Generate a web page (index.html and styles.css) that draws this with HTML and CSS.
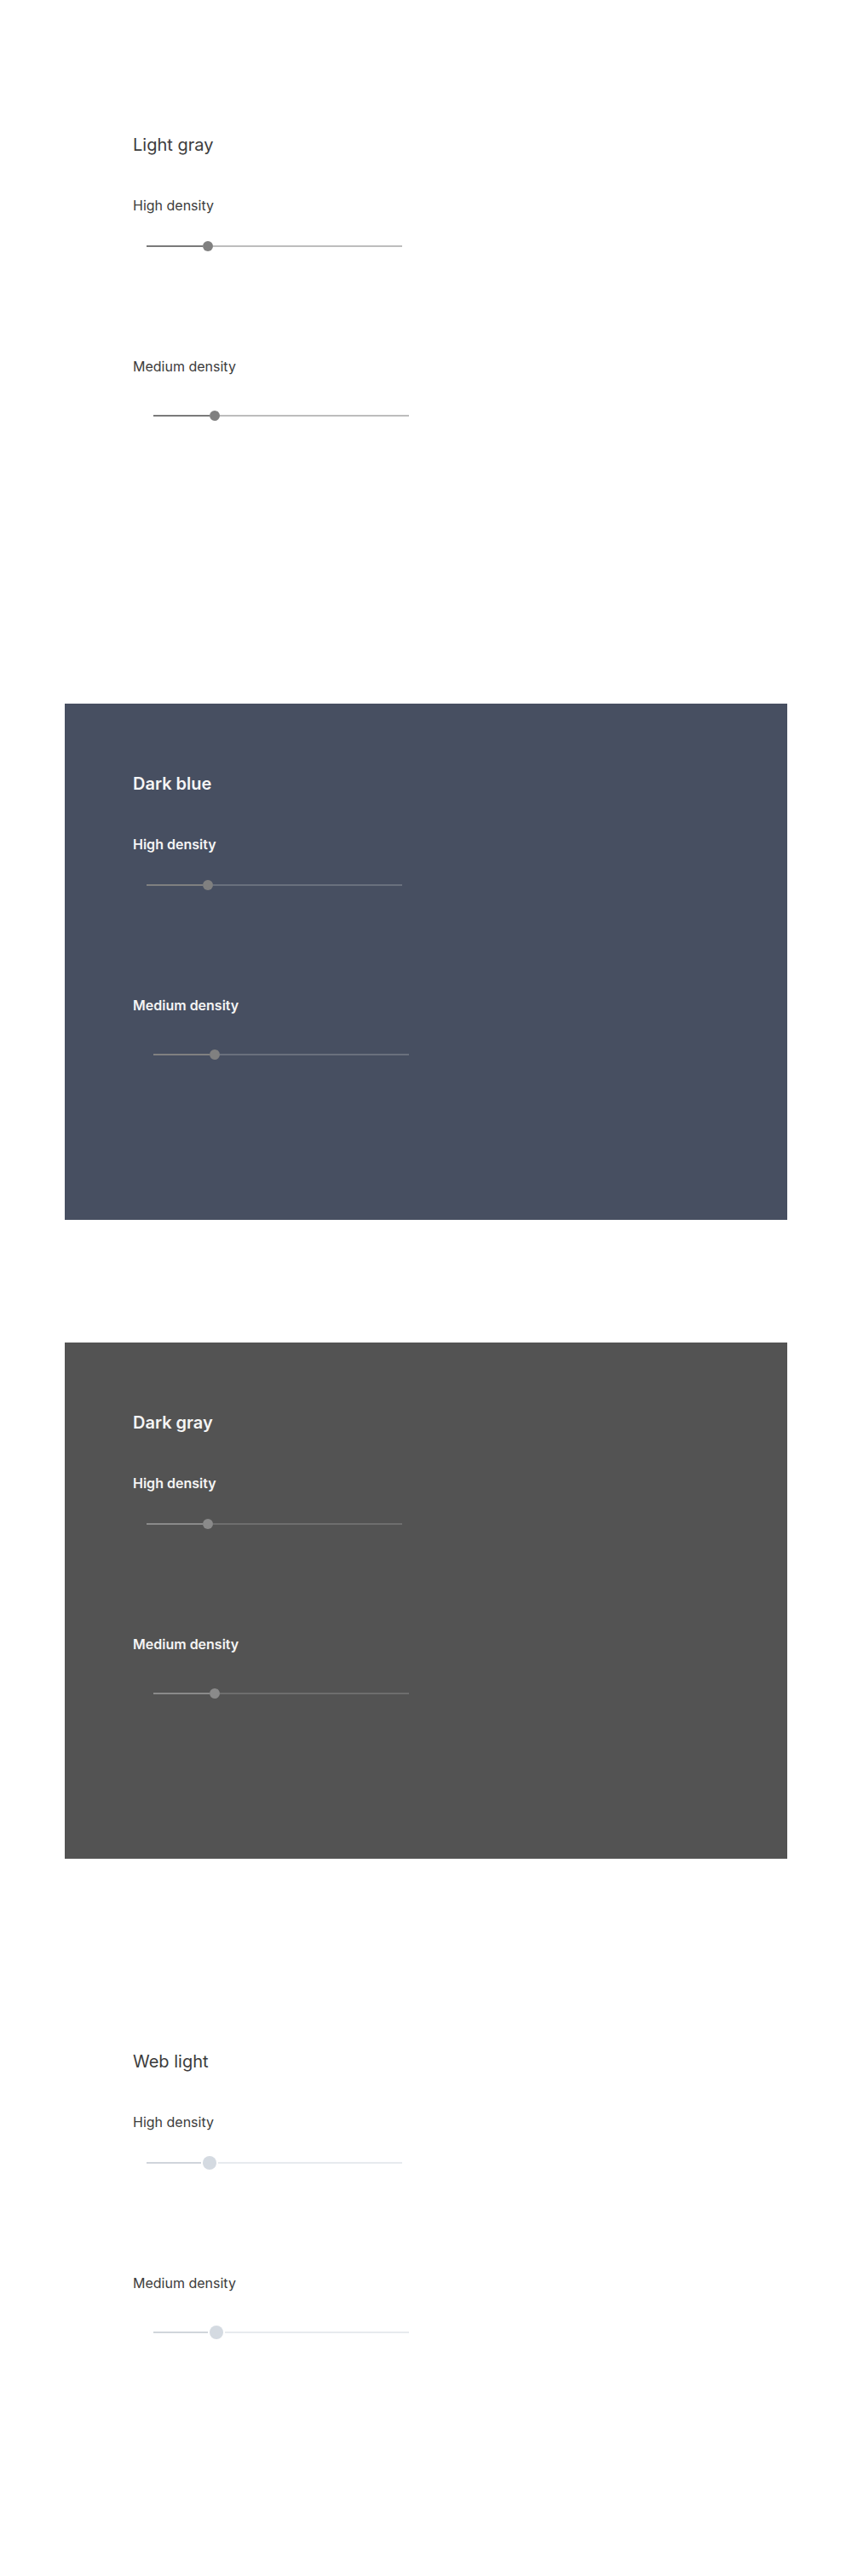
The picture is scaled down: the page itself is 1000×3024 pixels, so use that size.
FILE: index.html
```html
<!DOCTYPE html>
<html>
<head>
<meta charset="utf-8">
<link rel="stylesheet" href="styles.css">
</head>
<body>
<main class="page">
  <section class="panel theme-light">
    <h2 class="title">Light gray</h2>
    <div class="group high">
      <div class="label">High density</div>
      <div class="slider"><span class="fill"></span><span class="thumb"></span><span class="rest"></span></div>
    </div>
    <div class="group medium">
      <div class="label">Medium density</div>
      <div class="slider"><span class="fill"></span><span class="thumb"></span><span class="rest"></span></div>
    </div>
  </section>

  <section class="panel theme-darkblue">
    <h2 class="title">Dark blue</h2>
    <div class="group high">
      <div class="label">High density</div>
      <div class="slider"><span class="fill"></span><span class="thumb"></span><span class="rest"></span></div>
    </div>
    <div class="group medium">
      <div class="label">Medium density</div>
      <div class="slider"><span class="fill"></span><span class="thumb"></span><span class="rest"></span></div>
    </div>
  </section>

  <section class="panel theme-darkgray">
    <h2 class="title">Dark gray</h2>
    <div class="group high">
      <div class="label">High density</div>
      <div class="slider"><span class="fill"></span><span class="thumb"></span><span class="rest"></span></div>
    </div>
    <div class="group medium">
      <div class="label">Medium density</div>
      <div class="slider"><span class="fill"></span><span class="thumb"></span><span class="rest"></span></div>
    </div>
  </section>

  <section class="panel theme-web">
    <h2 class="title">Web light</h2>
    <div class="group high">
      <div class="label">High density</div>
      <div class="slider"><span class="fill"></span><span class="thumb"></span><span class="rest"></span></div>
    </div>
    <div class="group medium">
      <div class="label">Medium density</div>
      <div class="slider"><span class="fill"></span><span class="thumb"></span><span class="rest"></span></div>
    </div>
  </section>
</main>
</body>
</html>
```

FILE: styles.css
```css
html, body {
  margin: 0;
  padding: 0;
  background: #ffffff;
}

body {
  font-family: Inter, "Open Sans", "Liberation Sans", sans-serif;
}

.page {
  padding: 76px;
  display: flex;
  flex-direction: column;
  gap: 144px;
}

.panel {
  height: 606px;
  box-sizing: border-box;
  padding: 82px 0 0 80px;
  display: flex;
  flex-direction: column;
}

.title {
  margin: 0;
  font-size: 20px;
  line-height: 24px;
  font-weight: 400;
}

.group {
  display: flex;
  flex-direction: column;
}

.group.high {
  margin-top: 49px;
}

.group.medium {
  margin-top: 121px;
}

.label {
  font-size: 16px;
  line-height: 20px;
  font-weight: 400;
}

.slider {
  width: 300px;
  height: 20px;
  display: flex;
  align-items: center;
}

.high .slider {
  margin-top: 28px;
  margin-left: 16px;
}

.medium .slider {
  margin-top: 38px;
  margin-left: 24px;
}

.fill {
  width: 66px;
  height: 2px;
}

.thumb {
  width: 12px;
  height: 12px;
  border-radius: 50%;
  flex: none;
}

.rest {
  flex: 1;
  height: 2px;
}

/* Light gray */
.theme-light {
  background: #ffffff;
  color: #3c3c3c;
}
.theme-light .fill { background: #7a7a7a; }
.theme-light .thumb { background: #808080; }
.theme-light .rest { background: #bdbdbd; }

/* Dark blue */
.theme-darkblue {
  background: #474f61;
  color: #f5f5f5;
}
.theme-darkblue .title,
.theme-darkblue .label { font-weight: 600; }
.theme-darkblue .fill { background: #808080; }
.theme-darkblue .thumb { background: #808080; }
.theme-darkblue .rest { background: #6a707d; }

/* Dark gray */
.theme-darkgray {
  background: #535353;
  color: #f5f5f5;
}
.theme-darkgray .title,
.theme-darkgray .label { font-weight: 600; }
.theme-darkgray .fill { background: #8a8a8a; }
.theme-darkgray .thumb { background: #8a8a8a; }
.theme-darkgray .rest { background: #6e6e6e; }

/* Web light */
.theme-web {
  background: #ffffff;
  color: #3c3c3c;
}
.theme-web .fill {
  width: 64px;
  background: #d0d5db;
}
.theme-web .thumb {
  width: 16px;
  height: 16px;
  margin: 0 2px;
  background: #d4dae1;
}
.theme-web .rest { background: #e7eaee; }
```
